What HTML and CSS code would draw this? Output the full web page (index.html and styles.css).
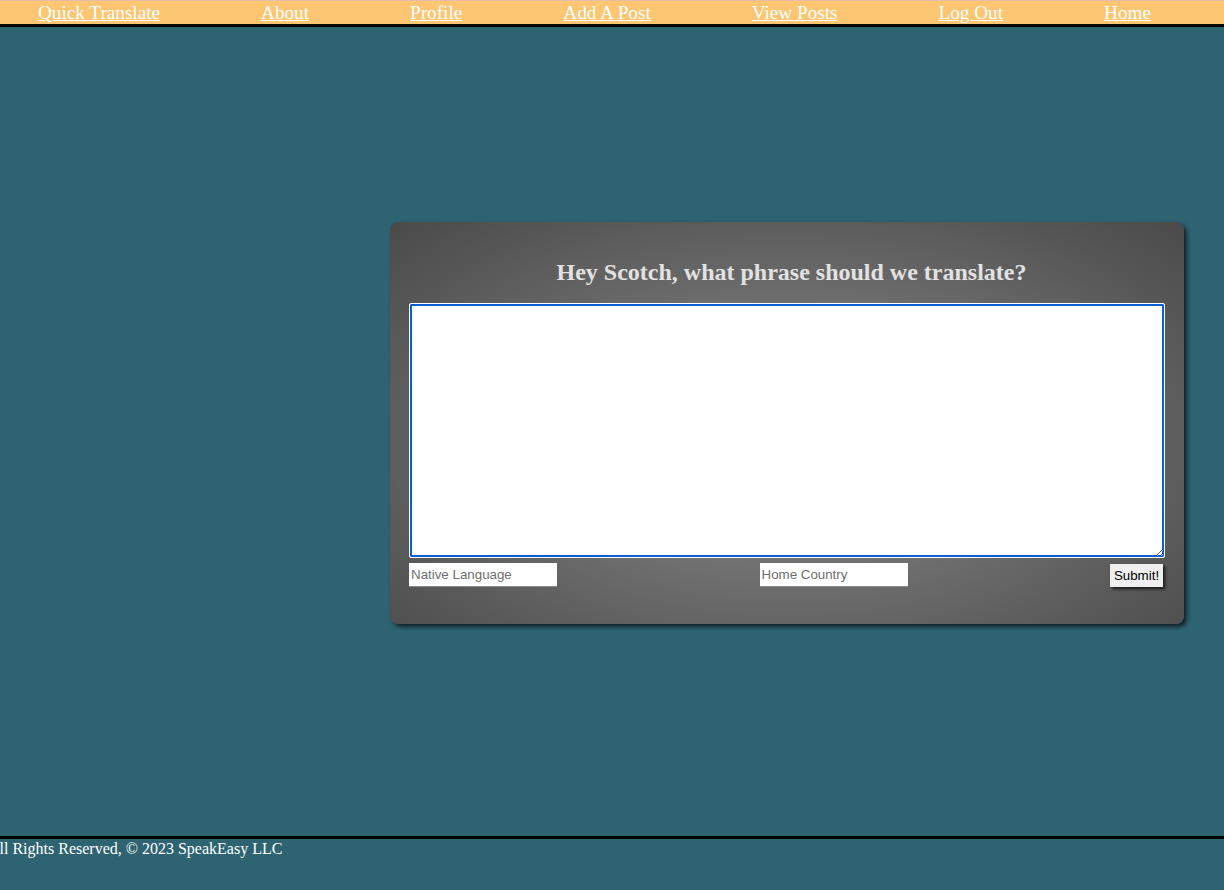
FILE: index.html
```html
<!DOCTYPE html>
<html>
<head>
<meta charset="utf-8">
<link rel="stylesheet" href="styles.css">
</head>
<body>
<nav class="nav">
  <a href="#">Quick Translate</a>
  <a href="#">About</a>
  <a href="#">Profile</a>
  <a href="#">Add A Post</a>
  <a href="#">View Posts</a>
  <a href="#">Log Out</a>
  <a href="#">Home</a>
</nav>
<main class="main">
  <form class="card">
    <h2 class="title">Hey Scotch, what phrase should we translate?</h2>
    <textarea class="phrase"></textarea>
    <div class="row">
      <input class="field" type="text" placeholder="Native Language">
      <input class="field" type="text" placeholder="Home Country">
      <button class="submit" type="button">Submit!</button>
    </div>
  </form>
</main>
<footer class="footer">All Rights Reserved, © 2023 SpeakEasy LLC</footer>
</body>
</html>
```
FILE: styles.css
```css
html, body {
  margin: 0;
  padding: 0;
}
body {
  background: #2e6372;
  font-family: "Liberation Serif", "Times New Roman", serif;
  height: 890px;
  overflow: hidden;
}
.nav {
  display: flex;
  justify-content: space-between;
  align-items: center;
  box-sizing: border-box;
  height: 27px;
  padding: 0 73px 0 38px;
  background: #fcc672;
  border-top: 1px solid #e9bba8;
  border-bottom: 3px solid #000;
}
.nav a {
  color: #fff;
  font-size: 19.2px;
  line-height: 23px;
  text-decoration: underline;
}
.main {
  box-sizing: border-box;
  height: 809px;
  display: flex;
  align-items: flex-start;
  padding: 195px 40px 0 390px;
}
.card {
  box-sizing: border-box;
  width: 794px;
  height: 402px;
  padding: 17px 19px 0 19px;
  border-radius: 8px;
  background: radial-gradient(ellipse at 50% 55%, #848484 0%, #717171 40%, #5a5a5a 75%, #4a4a4a 100%);
  box-shadow: 3px 3px 4px rgba(0, 0, 0, 0.65);
  display: flex;
  flex-direction: column;
}
.title {
  margin: 20px 0 17px 0;
  padding-left: 9px;
  font-size: 24px;
  line-height: 27px;
  font-weight: bold;
  text-align: center;
  color: #e2e2e2;
}
.phrase {
  box-sizing: border-box;
  width: 756px;
  height: 255px;
  margin: 0;
  border: 1px solid #fff;
  box-shadow: inset 0 0 0 2px #0a5fd4;
  background: #fff;
  border-radius: 2px;
  outline: none;
  padding: 2px;
}
.row {
  display: flex;
  justify-content: space-between;
  align-items: flex-start;
  margin-top: 5px;
}
.field {
  box-sizing: border-box;
  width: 148px;
  height: 24px;
  margin: 0;
  padding: 1px 2px;
  border: none;
  border-bottom: 1px solid #8a8a8a;
  background: #fff;
  font-family: "Liberation Sans", Arial, sans-serif;
  font-size: 13.33px;
}
.field::placeholder {
  color: #6f6f6f;
}
.submit {
  box-sizing: border-box;
  width: 53px;
  height: 23px;
  margin: 1px 2px 0 0;
  padding: 0;
  border: none;
  background: #efefef;
  box-shadow: 2px 2px 3px rgba(0, 0, 0, 0.75);
  font-family: "Liberation Sans", Arial, sans-serif;
  font-size: 13.33px;
  color: #000;
}
.footer {
  border-top: 3px solid #000;
  color: #fff;
  font-size: 16px;
  line-height: 19px;
  text-indent: -12px;
  white-space: nowrap;
}
```
